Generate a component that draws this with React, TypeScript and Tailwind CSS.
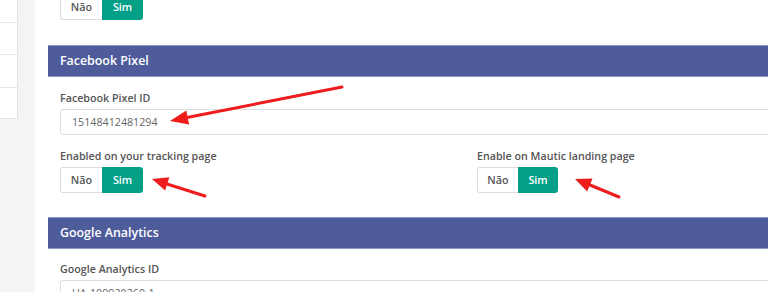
import React from 'react';

function YesNo({ narrow = false }: { narrow?: boolean }) {
  return (
    <div className="flex h-[26px] text-[10.8px] font-semibold">
      <div
        className={`flex items-center justify-center rounded-l-[3px] border border-r-0 border-[#dcdcdc] bg-white text-[#555] ${
          narrow ? 'w-[41px]' : 'w-[42px]'
        }`}
      >
        Não
      </div>
      <div
        className={`flex items-center justify-center rounded-r-[3px] bg-[#03a087] text-white ${
          narrow ? 'w-[40px]' : 'w-[41px]'
        }`}
      >
        Sim
      </div>
    </div>
  );
}

function PanelHeader({ title }: { title: string }) {
  return (
    <div className="flex h-[32px] items-center border-y border-[#8d97c4] bg-[#4e5c9b] px-[12px] text-[12.4px] font-semibold text-white">
      {title}
    </div>
  );
}

function Field({ label, value }: { label: string; value: string }) {
  return (
    <div className="flex flex-col">
      <label className="mb-[3px] text-[10.7px] font-semibold leading-[16px] text-[#555]">{label}</label>
      <div className="flex h-[26px] items-center rounded-[3px] border border-[#dedede] bg-white px-[11px] text-[10.7px] text-[#666]">
        {value}
      </div>
    </div>
  );
}

export default function App() {
  return (
    <div className="relative flex h-[292px] w-[768px] overflow-hidden bg-[#f4f4f4] font-['Open_Sans',sans-serif]">
      {/* sidebar list */}
      <div className="w-[18px] shrink-0">
        <div className="border-r border-[#e4e4e4] bg-white">
          <div className="h-[23px] border-b border-[#e6e6e6]" />
          <div className="h-[32px] border-b border-[#e6e6e6]" />
          <div className="h-[33px] border-b border-[#e6e6e6]" />
          <div className="h-[31px] border-b border-[#e6e6e6]" />
        </div>
      </div>

      {/* main card */}
      <div className="ml-[17px] flex-1 bg-white pl-[13px]">
        <div className="flex h-[45px] flex-col pl-[12px]">
          <div className="-mt-[6px]">
            <YesNo />
          </div>
        </div>

        <div className="w-[858px]">
          <PanelHeader title="Facebook Pixel" />
          <div className="px-[12px] pt-[13px] pb-[24px]">
            <Field label="Facebook Pixel ID" value="15148412481294" />
            <div className="mt-[13px] grid grid-cols-[388px_1fr] gap-[30px]">
              <div>
                <label className="mb-[3px] block text-[10.7px] font-semibold leading-[16px] text-[#555]">
                  Enabled on your tracking page
                </label>
                <YesNo />
              </div>
              <div className="-ml-[1px]">
                <label className="mb-[3px] block text-[10.7px] font-semibold leading-[16px] text-[#555]">
                  Enable on Mautic landing page
                </label>
                <YesNo narrow />
              </div>
            </div>
          </div>

          <PanelHeader title="Google Analytics" />
          <div className="px-[12px] pt-[12px]">
            <Field label="Google Analytics ID" value="UA-109920260-1" />
          </div>
        </div>
      </div>

      {/* annotation arrows */}
      <svg className="pointer-events-none absolute left-0 top-0" width="768" height="292">
        <g stroke="#ee1c1c" strokeWidth="3" strokeLinecap="round">
          <line x1="342" y1="87" x2="187" y2="117.5" />
          <line x1="205" y1="196" x2="167" y2="184" />
          <line x1="619" y1="197" x2="590" y2="185" />
        </g>
        <g fill="#ee1c1c">
          <polygon points="170,121 189.1,124.4 186.3,110.6" />
          <polygon points="152,179 169.3,177.2 165.1,190.6" />
          <polygon points="575,179 592.5,178.6 587.2,191.6" />
        </g>
      </svg>
    </div>
  );
}
